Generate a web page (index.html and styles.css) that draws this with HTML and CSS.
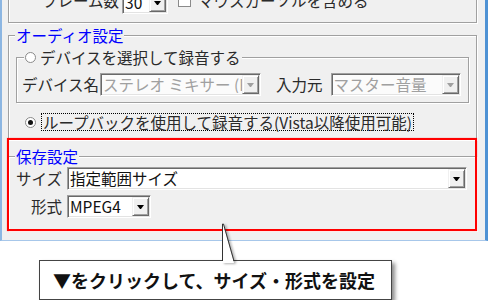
FILE: index.html
```html
<!DOCTYPE html>
<html lang="ja">
<head>
  <meta charset="UTF-8">
  <meta name="viewport" content="width=device-width, initial-scale=1.0">
  <title>保存設定</title>
  <link rel="stylesheet" href="styles.css">
</head>
<body>
  <div class="window">
    <div class="group group-top">
      <div class="row row-frames">
        <span class="label">フレーム数</span>
        <div class="combo combo-fps"><span class="value">30</span><span class="drop"></span></div>
        <span class="check"></span>
        <span class="label">マウスカーソルを含める</span>
      </div>
    </div>

    <div class="group group-audio">
      <span class="caption">オーディオ設定</span>
      <div class="group group-device">
        <span class="caption caption-radio"><span class="radio"></span>デバイスを選択して録音する</span>
        <div class="row row-device">
          <span class="label">デバイス名</span>
          <div class="combo combo-device disabled"><span class="value">ステレオ ミキサー (R</span><span class="drop"></span></div>
          <span class="label label-input">入力元</span>
          <div class="combo combo-input disabled"><span class="value">マスター音量</span><span class="drop"></span></div>
        </div>
      </div>
      <div class="row row-loopback">
        <span class="radio checked"></span>
        <span class="focus">ループバックを使用して録音する(Vista以降使用可能)</span>
      </div>
    </div>

    <div class="group group-save">
      <span class="caption">保存設定</span>
      <div class="form-grid">
        <span class="label">サイズ</span>
        <div class="combo combo-size"><span class="value">指定範囲サイズ</span><span class="drop"></span></div>
        <span class="label">形式</span>
        <div class="combo combo-format"><span class="value">MPEG4</span><span class="drop"></span></div>
      </div>
    </div>

    <!-- 注目枠 -->
    <div class="highlight"></div>
  </div>

  <div class="callout">
    <svg class="pointer" viewBox="0 0 20 42" width="20" height="42">
      <polygon points="4,2 5,2 16,41 4,41" fill="#fff"/>
      <polyline points="4.5,39 4.5,2 5.5,2 16,39" fill="none" stroke="#333" stroke-width="1"/>
    </svg>
    ▼をクリックして、サイズ・形式を設定
  </div>
</body>
</html>
```

FILE: styles.css
```css
body {
  margin: 0;
  background: #fff;
  font-family: "Noto Sans CJK JP", "Noto Sans", sans-serif;
  font-size: 15.5px;
  line-height: 17px;
  color: #2a2a2a;
}

.window {
  position: relative;
  height: 241px;
  box-sizing: border-box;
  overflow: hidden;
  background: #f0f0f0;
  border-left: 2px solid #8cb6e2;
  border-right: 3px solid #4f92d4;
  border-bottom: 1px solid #a7c7ea;
}

/* グループボックス */
.group {
  box-sizing: border-box;
  border: 1px solid #a0a0a0;
  box-shadow: inset 1px 1px #fff, 1px 1px #fff;
}
.group-top {
  margin: -14px 0 0 6px;
  width: 469px;
  height: 37px;
}
.group-audio {
  margin: 12px 0 0 6px;
  width: 469px;
  height: 105px;
}
.group-device {
  margin: 13px 0 0 7px;
  width: 453px;
  height: 46px;
}
.group-save {
  margin: 16px 0 0 6px;
  width: 469px;
  height: 75px;
}

.caption {
  display: table;
  margin: -9px 0 0 6px;
  padding: 0 1px;
  background: #f0f0f0;
  color: #0000ff;
}
.caption-radio {
  display: flex;
  width: fit-content;
  align-items: center;
  gap: 4px;
  margin-left: 7px;
  color: #2a2a2a;
}

.row {
  display: flex;
  align-items: center;
}
.row-frames {
  align-items: flex-start;
  margin: 4px 0 0 33px;
}
.row-frames .label {
  margin-top: 1px;
}
.combo-fps {
  width: 46px;
  height: 22px;
  margin-left: 3px;
}
.check {
  width: 13px;
  height: 13px;
  box-sizing: border-box;
  margin: 3px 7px 0 10px;
  border: 1px solid #8a8a8a;
  background: #fff;
}

.row-device {
  margin: 7px 0 0 5px;
}
.combo-device {
  width: 161px;
  margin-left: 1px;
}
.label-input {
  margin-left: 15px;
}
.combo-input {
  width: 130px;
  margin-left: 8px;
}

.row-loopback {
  gap: 5px;
  margin: 10px 0 0 16px;
}
.focus {
  border: 1px dotted #000;
  padding: 0 1px;
  line-height: 16px;
}

.radio {
  flex: none;
  width: 11px;
  height: 11px;
  box-sizing: border-box;
  border: 1px solid #8a8a8a;
  border-radius: 50%;
  background: #fff;
  display: flex;
  align-items: center;
  justify-content: center;
}
.radio.checked::after {
  content: "";
  width: 5px;
  height: 5px;
  border-radius: 50%;
  background: #111;
}

.form-grid {
  display: grid;
  grid-template-columns: 48px 400px;
  column-gap: 5px;
  row-gap: 5px;
  align-items: center;
  margin: 2px 0 0 5px;
}
.form-grid .label {
  text-align: right;
}
.combo-size {
  height: 24px;
}
.combo-format {
  width: 84px;
  height: 24px;
}

/* コンボボックス */
.combo {
  display: flex;
  box-sizing: border-box;
  height: 23px;
  padding: 1px;
  background: #fff;
  border: 1px solid;
  border-color: #a0a0a0 #fff #fff #a0a0a0;
  box-shadow: inset 1px 1px #696969, inset -1px -1px #e3e3e3;
}
.combo .value {
  flex: 1;
  min-width: 0;
  align-self: center;
  padding-left: 1px;
  white-space: nowrap;
  overflow: hidden;
  color: #111;
}
.drop {
  flex: none;
  width: 17px;
  box-sizing: border-box;
  background: #f0f0f0;
  border: 1px solid;
  border-color: #f0f0f0 #696969 #696969 #f0f0f0;
  box-shadow: inset 1px 1px #fff, inset -1px -1px #a0a0a0;
  display: flex;
  align-items: center;
  justify-content: center;
}
.drop::after {
  content: "";
  width: 1px;
  border-left: 3px solid transparent;
  border-right: 3px solid transparent;
  border-top: 4px solid #000;
}
.combo.disabled {
  background: #fbfbfb;
}
.combo.disabled .value {
  color: #a0a0a0;
}
.combo.disabled .drop::after {
  border-top-color: #a0a0a0;
}

.highlight {
  position: absolute;
  left: 5px;
  top: 138px;
  width: 470px;
  height: 93px;
  box-sizing: border-box;
  border: 2px solid #ff0000;
  box-shadow: 0 0 1px rgba(255, 0, 0, 0.5);
}

/* 吹き出し */
.callout {
  position: relative;
  margin: 19px 0 0 39px;
  width: 353px;
  height: 40px;
  box-sizing: border-box;
  padding-left: 13px;
  border: 1px solid #444;
  background: #fff;
  box-shadow: 3px 3px 4px rgba(0, 0, 0, 0.45);
  font-size: 18px;
  font-weight: 700;
  line-height: 38px;
  color: #111;
  white-space: nowrap;
}
.pointer {
  position: absolute;
  left: 178px;
  top: -39px;
  overflow: visible;
  filter: drop-shadow(2px 1px 1px rgba(0, 0, 0, 0.3));
}
```
